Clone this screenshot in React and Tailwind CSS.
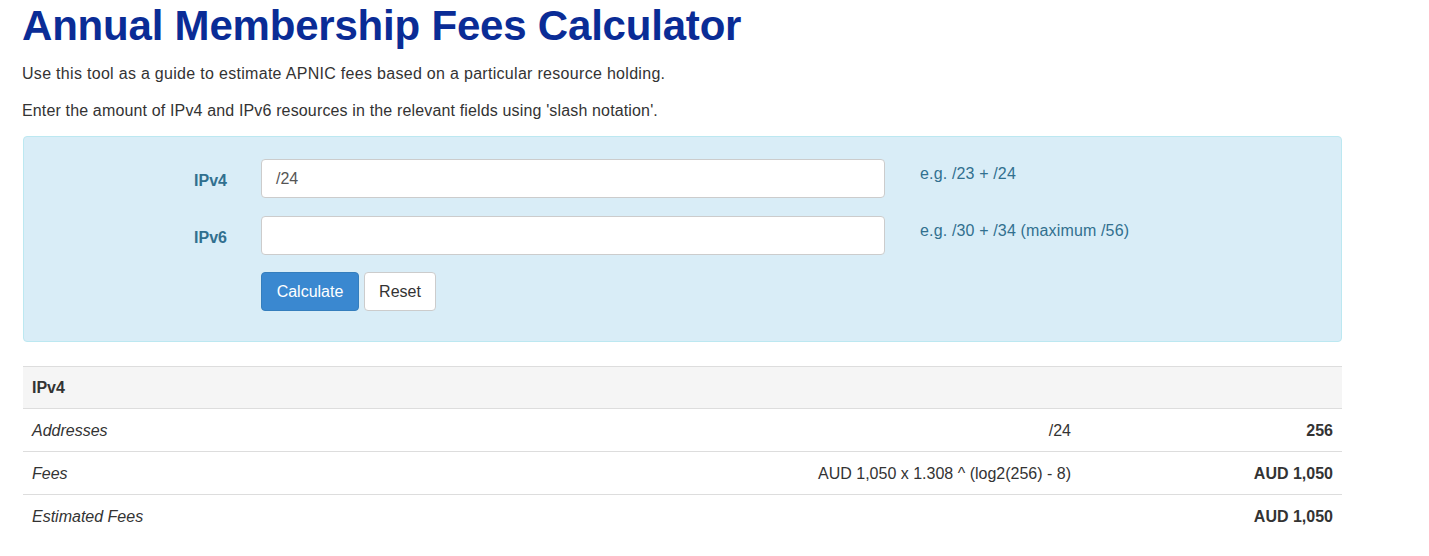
export default function App() {
  const font = { fontFamily: '"Liberation Sans", Arial, sans-serif' };
  return (
    <div className="min-h-[556px] bg-white text-[#333] px-[23px]" style={font}>
      <h1 className="pt-[2px] text-[42px] leading-[48px] font-bold text-[#0a2c96] tracking-[-0.2px] ml-[-1px]">
        Annual Membership Fees Calculator
      </h1>
      <p className="mt-[13px] text-[16px] leading-[21px] tracking-[0.3px] ml-[-1px]">
        Use this tool as a guide to estimate APNIC fees based on a particular resource holding.
      </p>
      <p className="mt-[16px] text-[16px] leading-[21px] tracking-[0.15px] ml-[-1px]">
        Enter the amount of IPv4 and IPv6 resources in the relevant fields using 'slash notation'.
      </p>
      <div className="mt-[15px] w-[1319px] h-[206px] bg-[#d9edf7] border border-[#bce8f1] rounded-[4px] pt-[22px]">
        <div className="flex flex-col gap-[18px]">
          <div className="flex items-start">
            <div className="w-[203px] h-[39px] flex items-center justify-end text-[16px] font-bold text-[#31708f] pt-[5px]">IPv4</div>
            <div className="ml-[34px] w-[624px] h-[39px] bg-white border border-[#ccc] rounded-[4px] flex items-center px-[14px] text-[16px] text-[#555]">/24</div>
            <div className="ml-[35px] pt-[3px] text-[16px] tracking-[0.15px] text-[#31708f]">e.g. /23 + /24</div>
          </div>
          <div className="flex items-start">
            <div className="w-[203px] h-[39px] flex items-center justify-end text-[16px] font-bold text-[#31708f] pt-[5px]">IPv6</div>
            <div className="ml-[34px] w-[624px] h-[39px] bg-white border border-[#ccc] rounded-[4px]"></div>
            <div className="ml-[35px] pt-[3px] text-[16px] tracking-[0.15px] text-[#31708f]">e.g. /30 + /34 (maximum /56)</div>
          </div>
          <div className="flex ml-[237px] gap-[5px] -mt-[1px]">
            <div className="w-[98px] h-[39px] bg-[#3a88d0] border border-[#357ebd] rounded-[4px] text-white text-[16px] flex items-center justify-center">Calculate</div>
            <div className="w-[72px] h-[39px] bg-white border border-[#ccc] rounded-[4px] text-[#333] text-[16px] flex items-center justify-center">Reset</div>
          </div>
        </div>
      </div>
      <div className="mt-[24px] w-[1319px] text-[16px]">
        <div className="h-[43px] bg-[#f5f5f5] border-t border-b border-[#ddd] flex items-center px-[9px] font-bold">IPv4</div>
        <div className="h-[43px] border-b border-[#ddd] flex items-center pt-[1px]">
          <div className="flex-1 pl-[9px] italic">Addresses</div>
          <div className="pr-[9px] text-right">/24</div>
          <div className="w-[262px] pr-[9px] text-right font-bold">256</div>
        </div>
        <div className="h-[43px] border-b border-[#ddd] flex items-center pt-[1px]">
          <div className="flex-1 pl-[9px] italic">Fees</div>
          <div className="pr-[9px] text-right">AUD 1,050 x 1.308 ^ (log2(256) - 8)</div>
          <div className="w-[262px] pr-[9px] text-right font-bold">AUD 1,050</div>
        </div>
        <div className="h-[43px] flex items-center">
          <div className="flex-1 pl-[9px] italic">Estimated Fees</div>
          <div className="w-[262px] pr-[9px] text-right font-bold">AUD 1,050</div>
        </div>
      </div>
    </div>
  );
}
